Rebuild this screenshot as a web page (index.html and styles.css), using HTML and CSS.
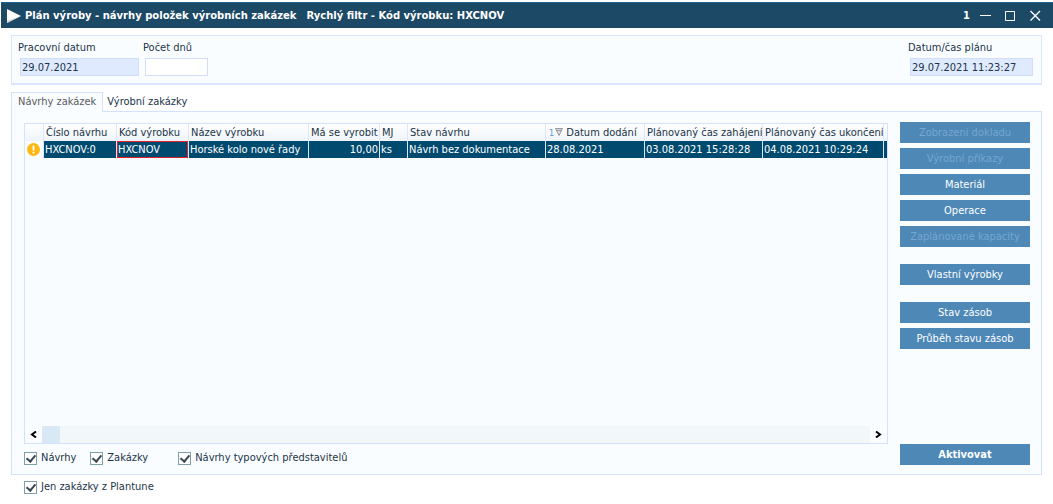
FILE: index.html
```html
<!DOCTYPE html>
<html lang="cs">
<head>
  <meta charset="UTF-8">
  <meta name="viewport" content="width=device-width, initial-scale=1.0">
  <title>Plán výroby</title>
  <link rel="stylesheet" href="styles.css">
</head>
<body>
  <header class="titlebar">
    <svg class="logo" width="16" height="14" viewBox="0 0 16 14"><path d="M1 0 L15 7 L1 14 Z" fill="#fff"/><path d="M1 14 L1 12 L15 7 Z" fill="#c8ced3"/></svg>
    <h1>Plán výroby - návrhy položek výrobních zakázek</h1>
    <h1>Rychlý filtr - Kód výrobku: HXCNOV</h1>
    <div class="window-buttons">
      <span class="window-number">1</span>
      <button type="button" aria-label="Minimalizovat"><svg width="11" height="11" viewBox="0 0 11 11"><path d="M0 5.5H11"/></svg></button>
      <button type="button" aria-label="Maximalizovat"><svg width="11" height="11" viewBox="0 0 11 11"><path d="M.5 1.5h9v9H.5z"/></svg></button>
      <button type="button" aria-label="Zavřít"><svg width="11" height="11" viewBox="0 0 11 11"><path d="M.5 1L10 10.500M10 1L.5 10.500" stroke-width="1.400"/></svg></button>
    </div>
  </header>

  <main>
    <section class="filter">
      <div class="field date">
        <label for="datum">Pracovní datum</label>
        <input type="text" id="datum" value="29.07.2021">
      </div>
      <div class="field days">
        <label for="dny">Počet dnů</label>
        <input type="text" id="dny">
      </div>
      <div class="field plan">
        <label for="plan">Datum/čas plánu</label>
        <input type="text" id="plan" value="29.07.2021 11:23:27" readonly>
      </div>
    </section>

    <div class="tabs" role="tablist">
      <button type="button" class="tab active" role="tab" aria-selected="true">Návrhy zakázek</button>
      <button type="button" class="tab" role="tab" aria-selected="false">Výrobní zakázky</button>
    </div>

    <section class="panel">
      <div class="left">
        <div class="grid">
          <div class="grid-rows">
            <table>
              <colgroup>
                <col class="c-icon"><col class="c-number"><col class="c-code"><col class="c-name"><col class="c-amount"><col class="c-unit"><col class="c-state"><col class="c-date"><col class="c-time"><col class="c-time-end"><col class="c-rest">
              </colgroup>
              <thead>
                <tr>
                  <th></th>
                  <th>Číslo návrhu</th>
                  <th>Kód výrobku</th>
                  <th>Název výrobku</th>
                  <th>Má se vyrobit</th>
                  <th>MJ</th>
                  <th>Stav návrhu</th>
                  <th><span class="sort">1</span><svg class="sort-icon" width="8" height="8" viewBox="0 0 8 8"><path d="M.5 .5H7.500L4 7.500Z" fill="#ddd" stroke="#999"/><path d="M2 2.500H6" stroke="#999"/></svg> Datum dodání</th>
                  <th>Plánovaný čas zahájení</th>
                  <th>Plánovaný čas ukončení</th>
                  <th></th>
                </tr>
              </thead>
              <tbody>
                <tr>
                  <td class="warn"><svg width="13" height="13" viewBox="0 0 13 13"><circle cx="6.500" cy="6.500" r="6.500" fill="#fdb913"/><path d="M6.500 2.500V7.500M6.500 8.800V10.600" stroke="#fff" stroke-width="1.800"/></svg></td>
                  <td>HXCNOV:0</td>
                  <td class="current">HXCNOV</td>
                  <td>Horské kolo nové řady</td>
                  <td class="num">10,00</td>
                  <td>ks</td>
                  <td>Návrh bez dokumentace</td>
                  <td>28.08.2021</td>
                  <td>03.08.2021 15:28:28</td>
                  <td>04.08.2021 10:29:24</td>
                  <td></td>
                </tr>
              </tbody>
            </table>
          </div>
          <div class="scrollbar">
            <button type="button" aria-label="Doleva"><svg width="7" height="7" viewBox="0 0 7 7"><path d="M6 .5L2 3.500L6 6.500"/></svg></button>
            <div class="thumb"></div>
            <button type="button" aria-label="Doprava"><svg width="7" height="7" viewBox="0 0 7 7"><path d="M1 .5L5 3.500L1 6.500"/></svg></button>
          </div>
        </div>
        <div class="checks">
          <label><input type="checkbox" checked>Návrhy</label>
          <label><input type="checkbox" checked>Zakázky</label>
          <label class="types"><input type="checkbox" checked>Návrhy typových představitelů</label>
        </div>
      </div>

      <div class="actions">
        <button type="button" disabled>Zobrazení dokladu</button>
        <button type="button" disabled>Výrobní příkazy</button>
        <button type="button">Materiál</button>
        <button type="button">Operace</button>
        <button type="button" disabled>Zaplánované kapacity</button>
        <button type="button" class="group">Vlastní výrobky</button>
        <button type="button" class="group">Stav zásob</button>
        <button type="button">Průběh stavu zásob</button>
        <button type="button" class="activate">Aktivovat</button>
      </div>
    </section>

    <div class="checks bottom">
      <label><input type="checkbox" checked>Jen zakázky z Plantune</label>
    </div>
  </main>
</body>
</html>
```
FILE: styles.css
```css
* { box-sizing: border-box; }
body { margin: 0; min-height: 100vh; display: flex; flex-direction: column; background: #fff; color: #1c3448; font: 11px/14px "DejaVu Sans Condensed", "DejaVu Sans", sans-serif; }
button, input { font: inherit; color: inherit; margin: 0; }
button { border: 0; padding: 0; background: none; }

.titlebar { display: flex; align-items: center; height: 26px; margin: 2px 0 0 1px; padding: 0 12px 0 5px; background: #1c4966; border-top: 1px solid #1b6293; color: #fff; }
.titlebar h1 { margin: 0 10px 0 0; font: bold 10px/14px "DejaVu Sans", sans-serif; white-space: nowrap; }
.logo { margin-right: 3px; }
.window-buttons { display: flex; align-items: center; gap: 14px; margin-left: auto; }
.window-number { font-weight: bold; margin-right: -4px; }
.window-buttons button { width: 11px; height: 11px; }
.window-buttons svg { display: block; fill: none; stroke: #fff; }

main { flex: 1; display: flex; flex-direction: column; padding: 7px 11px 0; }
.filter { display: flex; gap: 6px; height: 50px; padding: 5px 8px 0; border: 1px solid #dbe6fd; border-bottom-width: 2px; background: #f9fdff; }
.field label { display: block; margin-left: -2px; padding-bottom: 3px; white-space: nowrap; }
.field input { display: block; width: 100%; height: 18px; padding: 0 1px; border: 1px solid #d0defc; background: #dfeafe; }
.date { width: 119px; }
.days { width: 63px; }
.field.days input { background: #fff; }
.plan { width: 123px; margin-left: auto; }

.tabs { display: flex; align-items: flex-end; margin-top: 7px; }
.tab { height: 19px; padding: 0 4px; white-space: nowrap; }
.tab.active { height: 20px; margin-bottom: -1px; padding: 0 6px 2px; border: 1px solid #d5e2fd; border-bottom: 0; background: #f9fdff; color: #5a5a5a; z-index: 1; }

.panel { flex: 1; display: flex; gap: 12px; padding: 11px 11px 9px 12px; border: 1px solid #d5e2fd; background: #f9fdff; }
.left { flex: 1; min-width: 0; display: flex; flex-direction: column; }
.grid { flex: 1; display: flex; flex-direction: column; border: 1px solid #d5e2fd; background: #f8fcff; }
.grid-rows { flex: 1; overflow: hidden; }
table { width: 100%; min-width: 862px; table-layout: fixed; border-collapse: separate; border-spacing: 0; }
th, td { height: 17px; padding: 0 1px; overflow: hidden; text-align: left; white-space: nowrap; font-weight: normal; line-height: 14px; border-right: 1px solid #dce7fa; }
th { padding-left: 2px; background: linear-gradient(#fff, #eef4fa); }
td { background: #004a70; color: #fff; }
td.warn { padding: 0 2px; background: #f8fcff; }
td.warn svg { display: block; }
td.current { box-shadow: inset 0 0 0 1px #e01f2d; }
td.num { text-align: right; }
th:last-child, td:last-child { border-right: 0; }
.sort { margin: 0 1px; color: #5a9cd0; font-size: 9px; }
.sort-icon { vertical-align: 0; }
.c-icon { width: 19px; }
.c-number { width: 73px; }
.c-code { width: 72px; }
.c-name { width: 120px; }
.c-amount { width: 71px; }
.c-unit { width: 28px; }
.c-state { width: 138px; }
.c-date { width: 99px; }
.c-time { width: 118px; }
.c-time-end { width: 121px; }

.scrollbar { display: flex; height: 17px; background: #f2f7fa; }
.scrollbar button { width: 17px; background: #f9fdff; }
.scrollbar button:last-child { margin-left: auto; }
.scrollbar svg { display: block; margin: auto; fill: none; stroke: #000; stroke-width: 2; }
.thumb { width: 18px; background: #d9e8f5; }

.checks { display: flex; gap: 14px; padding-top: 7px; }
.checks label { display: flex; align-items: center; gap: 4px; height: 14px; white-space: nowrap; }
.checks input { appearance: none; display: grid; place-items: center; width: 13px; height: 13px; border: 1px solid #7fa0a8; background: #fff; }
.checks input:checked::before { content: ""; width: 4px; height: 7px; margin-top: -2px; border: solid #3b4a52; border-width: 0 2px 2px 0; transform: rotate(40deg); }
.checks .types { margin-left: 16px; }
.bottom { height: 29px; padding: 5px 13px 0; }

.actions { display: flex; flex-direction: column; gap: 5px; width: 130px; margin-top: -1px; }
.actions button { height: 21px; background: #4d88b7; color: #fff; }
.actions button:disabled { color: #76a7cf; }
.actions .group { margin-top: 12px; }
.actions .activate { margin-top: auto; font-weight: bold; }
```
